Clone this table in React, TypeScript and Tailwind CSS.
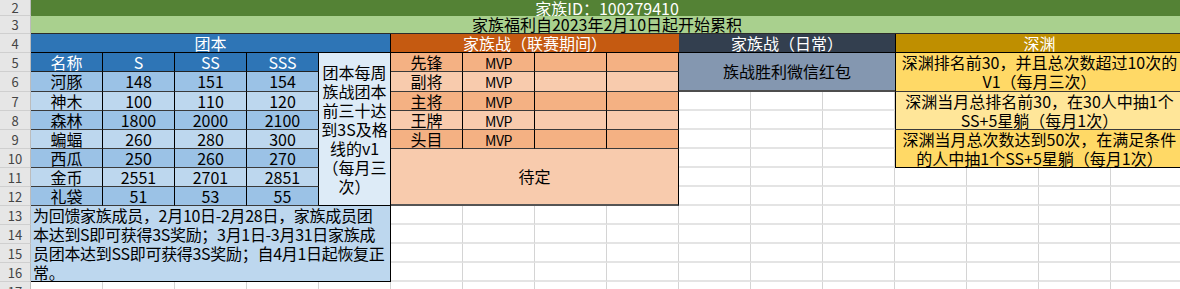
import React from "react";

const cjk = "font-['Noto_Sans_CJK_SC','Noto_Sans_CJK_JP',sans-serif]";

const rowHeads: [string, string][] = [
  ["2", "row-start-1"],
  ["3", "row-start-2"],
  ["4", "row-start-3"],
  ["5", "row-start-4"],
  ["6", "row-start-5"],
  ["7", "row-start-6"],
  ["8", "row-start-7"],
  ["9", "row-start-8"],
  ["10", "row-start-9"],
  ["11", "row-start-10"],
  ["12", "row-start-11"],
  ["13", "row-start-12"],
  ["14", "row-start-13"],
  ["15", "row-start-14"],
  ["16", "row-start-15"],
  ["17", "row-start-16"],
];

const tuanben = [
  ["河豚", "148", "151", "154"],
  ["神木", "100", "110", "120"],
  ["森林", "1800", "2000", "2100"],
  ["蝙蝠", "260", "280", "300"],
  ["西瓜", "250", "260", "270"],
  ["金币", "2551", "2701", "2851"],
  ["礼袋", "51", "53", "55"],
];

const positions = ["先锋", "副将", "主将", "王牌", "头目"];

function Blank({ area, count }: { area: string; count: number }) {
  return (
    <div className={`${area} grid grid-cols-subgrid grid-rows-subgrid`}>
      {Array.from({ length: count }).map((_, i) => (
        <div
          key={i}
          className="border-r border-b-2 border-r-[#d4d4d4] border-b-[#e4e4e4]"
        />
      ))}
    </div>
  );
}

export default function App() {
  return (
    <div
      className={`w-[1180px] h-[289px] overflow-hidden bg-white text-[16px] leading-[19px] text-black ${cjk}`}
    >
      <div className="grid grid-cols-[31px_repeat(16,72px)] grid-rows-[16px_18px_19px_19px_20px_19px_19px_19px_19px_19px_19px_19px_19px_19px_19px_19px] auto-rows-[19px]">
        {/* row numbers */}
        {rowHeads.map(([n, row]) => (
          <div
            key={n}
            className={`${row} col-start-1 flex items-center justify-center bg-[#e6e6e6] border-b border-r border-b-[#cfcfcf] border-r-[#bcbcbc] text-[13px] text-[#444] leading-none`}
          >
            {n}
          </div>
        ))}

        {/* title rows */}
        <div className="col-start-2 col-end-18 row-start-1 flex items-center justify-center bg-[#548235] text-white leading-[16px]">
          家族ID：100279410
        </div>
        <div className="col-start-2 col-end-18 row-start-2 flex items-center justify-center bg-[#a9d08e] border-b border-[#2b2b2b] leading-[17px]">
          家族福利自2023年2月10日起开始累积
        </div>

        {/* section headers */}
        <div className="col-start-2 col-end-7 row-start-3 flex items-center justify-center bg-[#2e75b6] text-white border-b border-r border-black">
          团本
        </div>
        <div className="col-start-7 col-end-11 row-start-3 flex items-center justify-center bg-[#c55a11] text-white border-b border-black">
          家族战（联赛期间）
        </div>
        <div className="col-start-11 col-end-14 row-start-3 flex items-center justify-center bg-[#333f4f] text-white border-b border-black">
          家族战（日常）
        </div>
        <div className="col-start-14 col-end-18 row-start-3 flex items-center justify-center bg-[#bf8f00] text-white border-b border-l border-black">
          深渊
        </div>

        {/* 团本 table */}
        <div className="col-start-2 col-end-6 row-start-4 row-end-12 grid grid-cols-subgrid grid-rows-subgrid">
          {["名称", "S", "SS", "SSS"].map((h) => (
            <div
              key={h}
              className="flex items-center justify-center bg-[#2e75b6] text-white border-r border-b border-r-black border-b-[#222]"
            >
              {h}
            </div>
          ))}
          {tuanben.map((row, r) =>
            row.map((v, c) => (
              <div
                key={`${r}-${c}`}
                className={`flex items-center justify-center border-r border-b border-r-black border-b-[#3a3a3a] ${
                  r % 2 === 0 ? "bg-[#9bc2e6]" : "bg-[#bdd7ee]"
                }`}
              >
                {v}
              </div>
            ))
          )}
        </div>
        <div className="col-start-6 row-start-4 row-end-12 flex items-center justify-center bg-[#ddebf7] border-r border-b border-black text-center">
          <div>
            团本每周
            <br />
            族战团本
            <br />
            前三十达
            <br />
            到3S及格
            <br />
            线的v1
            <br />
            （每月三
            <br />
            次）
          </div>
        </div>
        <div className="col-start-2 col-end-7 row-start-12 row-end-16 flex flex-col overflow-hidden bg-[#bdd7ee] border-r border-b border-black px-[2px] whitespace-nowrap tracking-[-0.3px]">
          <div>为回馈家族成员，2月10日-2月28日，家族成员团</div>
          <div>本达到S即可获得3S奖励；3月1日-3月31日家族成</div>
          <div>员团本达到SS即可获得3S奖励；自4月1日起恢复正</div>
          <div>常。</div>
        </div>

        {/* 家族战 (联赛期间) */}
        <div className="col-start-7 col-end-11 row-start-4 row-end-9 grid grid-cols-subgrid grid-rows-subgrid">
          {positions.map((p, r) =>
            [p, "MVP", "", ""].map((v, c) => (
              <div
                key={`${r}-${c}`}
                className={`flex items-center justify-center border-r border-b border-r-black border-b-[#3a3a3a] ${
                  r % 2 === 0 ? "bg-[#f4b183]" : "bg-[#f8cbad]"
                } ${c === 1 ? "pt-[2px] text-[14px] tracking-[-0.5px]" : ""}`}
              >
                {v}
              </div>
            ))
          )}
        </div>
        <div className="col-start-7 col-end-11 row-start-9 row-end-12 flex items-center justify-center bg-[#f8cbad] border-r border-r-black border-b-2 border-b-[#555]">
          待定
        </div>

        {/* 家族战 (日常) */}
        <div className="col-start-11 col-end-14 row-start-4 row-end-6 flex items-center justify-center bg-[#8497b0] border-b-2 border-b-[#4d4d4d]">
          族战胜利微信红包
        </div>

        {/* 深渊 */}
        <div className="col-start-14 col-end-18 row-start-4 row-end-6 flex items-center justify-center bg-[#ffd966] border-l border-b border-l-black border-b-[#3a3a3a] text-center">
          <div>
            深渊排名前30，并且总次数超过10次的
            <br />
            V1（每月三次）
          </div>
        </div>
        <div className="col-start-14 col-end-18 row-start-6 row-end-8 flex items-center justify-center bg-[#ffe699] border-l border-b border-l-black border-b-[#3a3a3a] text-center">
          <div>
            深渊当月总排名前30，在30人中抽1个
            <br />
            SS+5星躺（每月1次）
          </div>
        </div>
        <div className="col-start-14 col-end-18 row-start-8 row-end-10 flex items-center justify-center bg-[#ffd966] border-l border-b border-black text-center">
          <div>
            深渊当月总次数达到50次，在满足条件
            <br />
            的人中抽1个SS+5星躺（每月1次）
          </div>
        </div>

        {/* empty sheet cells */}
        <Blank area="col-start-2 col-end-7 row-start-16 row-end-17" count={5} />
        <Blank area="col-start-7 col-end-11 row-start-12 row-end-17" count={20} />
        <Blank area="col-start-11 col-end-14 row-start-6 row-end-17" count={33} />
        <Blank area="col-start-14 col-end-18 row-start-10 row-end-17" count={28} />
      </div>
    </div>
  );
}
